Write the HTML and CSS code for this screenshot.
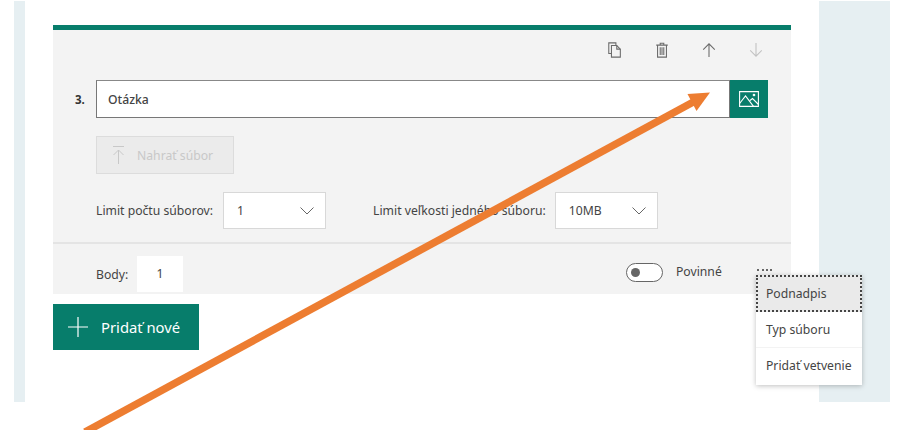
FILE: index.html
```html
<!DOCTYPE html>
<html lang="sk">
<head>
  <meta charset="UTF-8">
  <title>Otázka</title>
  <link rel="stylesheet" href="styles.css">
</head>
<body>
  <div class="page">
    <div class="side side-left"></div>
    <main class="content">
      <section class="card">
        <div class="toolbar">
          <svg class="tool" viewBox="0 0 16 18" fill="none" stroke="#6b6b6b" stroke-width="1.2"><path d="M9 3.500V1H1v12h3"/><path d="M4 4h6l4 4v9H4z"/><path d="M10 4v4h4"/></svg>
          <svg class="tool" viewBox="0 0 16 18" fill="none" stroke="#6b6b6b" stroke-width="1.2"><path d="M1.500 3.500h13M6 3.500V1.500h4v2M3 3.500V17h10V3.500"/><path d="M6 6v8.500M8 6v8.500M10 6v8.500"/></svg>
          <svg class="tool" viewBox="0 0 16 18" fill="none" stroke="#6b6b6b" stroke-width="1.2"><path d="M8 17V2M1.500 8.500 8 2l6.500 6.500"/></svg>
          <svg class="tool" viewBox="0 0 16 18" fill="none" stroke="#c2c2c2" stroke-width="1.2"><path d="M8 1v15M1.500 9.500 8 16l6.500-6.500"/></svg>
        </div>
        <div class="question">
          <span class="number">3.</span>
          <div class="question-input">Otázka</div>
          <div class="image-btn">
            <svg viewBox="0 0 20 16" width="20" height="16" fill="none" stroke="#fff" stroke-width="1.100"><path d="M.6.6h18.800v14.800H.6z"/><path d="M.6 12.500 6.500 5l8 10.400M11 9.500l2.500-2 6 6"/><circle cx="15" cy="4" r=".8"/></svg>
          </div>
        </div>
        <div class="upload">
          <svg viewBox="0 0 11 18" width="11" height="18" fill="none" stroke="#c8c8c8" stroke-width="1"><path d="M0 .5h11M5.500 18V4M.5 9 5.500 4l5 5"/></svg>
          <span>Nahrať súbor</span>
        </div>
        <div class="limits">
          <label class="limit">Limit počtu súborov:
            <span class="select">1<svg class="chevron" viewBox="0 0 14 8" fill="none" stroke="#666" stroke-width="1"><path d="M.5.500 7 7l6.500-6.500"/></svg></span>
          </label>
          <label class="limit limit-size">Limit veľkosti jedného súboru:
            <span class="select">10MB<svg class="chevron" viewBox="0 0 14 8" fill="none" stroke="#666" stroke-width="1"><path d="M.5.500 7 7l6.500-6.500"/></svg></span>
          </label>
        </div>
        <div class="footer">
          <div class="points">Body: <span class="points-value">1</span></div>
          <div class="required">
            <span class="toggle"><span class="knob"></span></span>
            <span class="required-label">Povinné</span>
          </div>
          <div class="more">
            <span class="dots"></span>
            <ul class="menu">
              <li class="menu-item active">Podnadpis</li>
              <li class="menu-item">Typ súboru</li>
              <li class="menu-item">Pridať vetvenie</li>
            </ul>
          </div>
        </div>
      </section>
      <div class="add-btn">
        <svg viewBox="0 0 20 20" width="20" height="20" stroke="#fff" stroke-width="1.200"><path d="M10 0v20M0 10h20"/></svg>
        <span>Pridať nové</span>
      </div>
    </main>
    <div class="side side-right"></div>
  </div>
  <svg class="arrow" viewBox="0 0 902 430" width="902" height="430">
    <path d="M85 432 697 100" stroke="#ed7d31" stroke-width="7.500" fill="none"/>
    <path d="M710 92.500 687.500 94 696.500 111z" fill="#ed7d31"/>
  </svg>
</body>
</html>
```

FILE: styles.css
```css
* {
  box-sizing: border-box;
}

body {
  margin: 0;
  background-color: #fff;
  font-family: "Noto Sans", Arial, sans-serif;
  font-size: 12.2px;
  color: #444;
  height: 430px;
  overflow: hidden;
  position: relative;
}

.page {
  display: flex;
  height: 402px;
  padding: 1px 12px 0 14px;
}

.side {
  background-color: #e6eff2;
  flex: none;
}

.side-left {
  width: 11px;
}

.side-right {
  width: 71px;
}

.content {
  flex: 1;
  padding: 24px 28px 0;
}

.card {
  background-color: #f3f3f3;
  border-top: 5px solid #077d6b;
  height: 269px;
  display: flex;
  flex-direction: column;
}

.toolbar {
  display: flex;
  justify-content: flex-end;
  gap: 31px;
  height: 50px;
  padding: 12px 27px 0 0;
}

.tool {
  width: 16px;
  height: 16px;
}

.question {
  display: flex;
  align-items: center;
  padding-left: 22px;
}

.number {
  width: 21px;
  font-weight: 700;
  font-size: 11.500px;
  color: #333;
}

.question-input {
  width: 634px;
  height: 38px;
  line-height: 37px;
  padding-left: 11px;
  background-color: #fff;
  border: 1px solid #777;
  border-top-color: #888;
  font-weight: 500;
  color: #444;
}

.image-btn {
  width: 38px;
  height: 38px;
  background-color: #077d6b;
  display: flex;
  align-items: center;
  justify-content: center;
}

.upload {
  display: flex;
  align-items: center;
  gap: 13px;
  width: 138px;
  height: 38px;
  margin: 18px 0 0 43px;
  padding-left: 16px;
  background-color: #ebebeb;
  border: 1px solid #dcdcdc;
  color: #c8c8c8;
}

.limits {
  display: flex;
  gap: 47px;
  margin: 18px 0 0 43px;
}

.limit {
  display: flex;
  align-items: center;
  gap: 10px;
}

.limit-size {
  gap: 9px;
}

.select {
  display: flex;
  align-items: center;
  justify-content: space-between;
  width: 103px;
  height: 37px;
  padding: 0 11px 0 13px;
  background-color: #fff;
  border: 1px solid #d8d8d8;
}

.chevron {
  width: 14px;
  height: 8px;
}

.footer {
  display: flex;
  align-items: flex-start;
  height: 52px;
  margin-top: 13px;
  padding: 12px 0 0 43px;
  border-top: 2px solid #e4e4e4;
}

.points {
  display: flex;
  align-items: center;
  justify-content: space-between;
  width: 87px;
}

.points-value {
  width: 46px;
  height: 36px;
  line-height: 36px;
  text-align: center;
  background-color: #fff;
}

.required {
  display: flex;
  align-items: center;
  gap: 13px;
  width: 96px;
  margin: 7px 0 0 443px;
}

.toggle {
  display: flex;
  align-items: center;
  flex: none;
  width: 37px;
  height: 19px;
  padding-left: 4px;
  background-color: #fff;
  border: 1.500px solid #666;
  border-radius: 10px;
}

.knob {
  width: 9px;
  height: 9px;
  border-radius: 50%;
  background-color: #666;
}

.required-label {
  position: relative;
  top: -1px;
}

.more {
  position: relative;
  margin-left: 35px;
  width: 16px;
  height: 20px;
}

.dots {
  position: absolute;
  top: 13px;
  left: 0;
  width: 15px;
  border-top: 2px dotted #666;
}

/* menu lies over the card edge */
.menu {
  position: absolute;
  top: 19px;
  left: -1px;
  width: 106px;
  margin: 0;
  padding: 0;
  list-style: none;
  background-color: #fff;
  box-shadow: 0 1px 5px rgba(0, 0, 0, 0.25);
}

.menu-item {
  height: 36px;
  line-height: 35px;
  padding-left: 10px;
  white-space: nowrap;
  border-bottom: 1px solid #f3f3f3;
}

.menu-item:last-child {
  border-bottom: none;
  height: 37px;
}

.menu-item.active {
  height: 37px;
  line-height: 33px;
  background-color: #eaeaea;
  border: 2px dotted #444;
  padding-left: 8px;
}

.add-btn {
  display: flex;
  align-items: center;
  gap: 13px;
  width: 146px;
  height: 46px;
  margin-top: 10px;
  padding-left: 15px;
  background-color: #077d6b;
  color: #fff;
  font-size: 14.800px;
}

.arrow {
  position: absolute;
  top: 0;
  left: 0;
  pointer-events: none;
}
```
